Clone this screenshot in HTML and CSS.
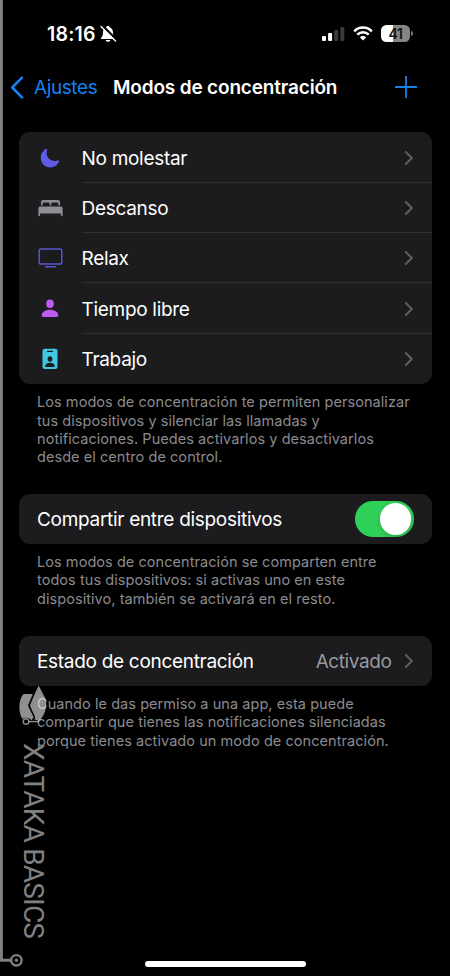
FILE: index.html
```html
<!DOCTYPE html>
<html lang="es">
<head>
<meta charset="utf-8">
<title>Modos de concentración</title>
<link rel="stylesheet" href="styles.css">
</head>
<body>
<svg class="defs" width="0" height="0" aria-hidden="true"><symbol id="chevron" viewBox="0 0 10 16"><path d="M1.8 2 L7.8 8 L1.8 14" fill="none" stroke="currentColor" stroke-width="2" stroke-linecap="round" stroke-linejoin="round"/></symbol></svg>
<div class="screen">
  <header class="status">
    <div class="clock"><span class="time">18:16</span>
      <svg class="bell" width="17" height="18" viewBox="0 0 17 18"><path fill="#fff" d="M8 1C9 1 9.7 1.6 9.9 2.4C12 3.2 13 5 13 7.5C13 10.8 14 11.5 14.8 12.7C15.2 13.5 14.8 14 14 14H2C1.2 14 .8 13.5 1.2 12.7C2 11.5 3 10.8 3 7.5C3 5 4 3.2 6.1 2.4C6.3 1.6 7 1 8 1ZM5.6 15H10.4C10 16.2 9.2 16.8 8 16.8S6 16.2 5.6 15Z"/><path d="M2.3 .6L16.8 14.9" stroke="#000" stroke-width="2.4"/><path d="M1 1.6L15.5 16.1" stroke="#fff" stroke-width="1.4" stroke-linecap="round"/></svg>
    </div>
    <div class="signals">
      <svg width="23" height="16" viewBox="0 0 23 16"><rect x="0" y="10" width="4" height="5" rx="1" fill="#fff"/><rect x="6.1" y="7" width="4" height="8" rx="1" fill="#fff"/><rect x="12.2" y="4" width="4" height="11" rx="1" fill="#3a3a3a"/><rect x="18.3" y="1" width="4" height="14" rx="1" fill="#3a3a3a"/></svg>
      <svg width="20" height="15" viewBox="0 0 20 15"><g fill="none" stroke="#fff" stroke-width="2.5"><path d="M1.2 5.3C6 .3 14 .3 18.8 5.3"/><path d="M4.3 8.7C7.5 5.5 12.5 5.5 15.7 8.7"/></g><path fill="#fff" d="M10 14.5L6.8 11.3C8.6 9.7 11.4 9.7 13.2 11.3Z"/></svg>
      <div class="battery"><span class="cell">41</span><i class="tip"></i></div>
    </div>
  </header>
  <nav class="nav">
    <svg class="back" width="14" height="23" viewBox="0 0 14 23"><path d="M12 1.7L2.2 11.5L12 21.3" fill="none" stroke="#1481ee" stroke-width="2.6" stroke-linecap="round" stroke-linejoin="round"/></svg>
    <span class="parent">Ajustes</span>
    <h1 class="title">Modos de concentración</h1>
    <svg class="add" width="22" height="22" viewBox="0 0 22 22"><path d="M11 .5V21.5M.5 11H21.5" stroke="#1481ee" stroke-width="1.8" stroke-linecap="round"/></svg>
  </nav>
  <main>
    <ul class="card modes">
      <li class="row"><span class="icon"><svg width="20" height="20" viewBox="0 0 20 20"><path fill="#5e5ce6" d="M6.1 1C6.8.7 7.4 1.2 7.1 1.9C4.7 8.4 10.8 14.6 18 12.6C18.9 12.3 19.4 12.9 19 13.7C17.3 17.4 14 19.4 10.4 19.4C5 19.4 .8 15.3.8 10C.8 6 2.9 2.4 6.1 1Z"/></svg></span><div class="line"><span class="label">No molestar</span><svg class="chev"><use href="#chevron"/></svg></div></li>
      <li class="row"><span class="icon"><svg width="25" height="18" viewBox="0 0 25 18"><g fill="#8e8e93"><path d="M3 6.5V3.2C3 1.7 3.8 1 5.2 1H19.8C21.2 1 22 1.7 22 3.2V6.5H20.4V5C20.4 3.9 19.9 3.4 18.9 3.4H14.8C13.8 3.4 13.3 3.9 13.3 5V6.5H11.7V5C11.7 3.9 11.2 3.4 10.2 3.4H6.1C5.1 3.4 4.6 3.9 4.6 5V6.5Z"/><path d="M.4 9.5C.4 8 1.2 7.4 2.6 7.4H22.4C23.8 7.4 24.6 8 24.6 9.5V16.5Q24.6 17.2 23.8 17.2Q23 17.2 23 16.5V14.4H2V16.5Q2 17.2 1.2 17.2Q.4 17.2 .4 16.5Z"/></g></svg></span><div class="line"><span class="label">Descanso</span><svg class="chev"><use href="#chevron"/></svg></div></li>
      <li class="row"><span class="icon"><svg width="25" height="20" viewBox="0 0 25 20"><rect x="1.2" y="1" width="22.6" height="15" rx="1.8" fill="none" stroke="#5856d0" stroke-width="1.5"/><path d="M7.5 18.7H17.5" stroke="#5856d0" stroke-width="1.5" stroke-linecap="round"/></svg></span><div class="line"><span class="label">Relax</span><svg class="chev"><use href="#chevron"/></svg></div></li>
      <li class="row"><span class="icon"><svg width="18" height="19" viewBox="0 0 18 19"><g fill="#bf5af2"><ellipse cx="9" cy="4.8" rx="3.8" ry="4.3"/><path d="M2.6 18C1.3 18 .7 17.4.7 16.3C.7 13.4 4 10.7 9 10.7S17.3 13.4 17.3 16.3C17.3 17.4 16.7 18 15.4 18Z"/></g></svg></span><div class="line"><span class="label">Tiempo libre</span><svg class="chev"><use href="#chevron"/></svg></div></li>
      <li class="row"><span class="icon"><svg width="16" height="22" viewBox="0 0 16 22"><rect x=".5" y=".7" width="15" height="20.4" rx="2.3" fill="#40c8e0"/><g fill="#1c1c1e"><rect x="4.8" y="2.7" width="6.4" height="1.2" rx=".6"/><ellipse cx="8" cy="11" rx="2.4" ry="2.7"/><path d="M3.2 18.3C3.2 16.4 5 14.8 8 14.8S12.8 16.4 12.8 18.3Q12.8 19 12 19H4Q3.2 19 3.2 18.3Z"/></g></svg></span><div class="line"><span class="label">Trabajo</span><svg class="chev"><use href="#chevron"/></svg></div></li>
    </ul>
    <p class="note first">Los modos de concentración te permiten personalizar<br>tus dispositivos y silenciar las llamadas y<br>notificaciones. Puedes activarlos y desactivarlos<br>desde el centro de control.</p>
    <section class="card single"><span class="label">Compartir entre dispositivos</span><span class="toggle"><i class="knob"></i></span></section>
    <p class="note second">Los modos de concentración se comparten entre<br>todos tus dispositivos: si activas uno en este<br>dispositivo, también se activará en el resto.</p>
    <section class="card single"><span class="label">Estado de concentración</span><span class="value">Activado</span><svg class="chev"><use href="#chevron"/></svg></section>
    <p class="note third">Cuando le das permiso a una app, esta puede<br>compartir que tienes las notificaciones silenciadas<br>porque tienes activado un modo de concentración.</p>
  </main>
  <div class="home"></div>
  <aside class="watermark">
    <svg class="frame" width="60" height="976" viewBox="0 0 60 976"><g fill="none" stroke="#808080"><path d="M1.4 0V960.3H11" stroke-width="3"/><circle cx="16.4" cy="960.3" r="5.2" stroke-width="2.4"/></g><circle cx="16.4" cy="960.3" r="1.7" fill="#808080"/>
    <g fill="#fff" fill-opacity=".56"><path d="M23.5 694H32.8L28 705.5L33.6 717.3L31.5 720.2Q29.5 717.8 26 717.8Q23.5 717.8 22.5 719C18.4 713 18 700 23.5 694Z"/><path d="M38.6 685.5L45.4 698.5C48 706 44.5 717 38.7 721L34.5 719.3L35.2 717.3L29.9 705.5L35 693.5Z"/></g><g fill="none" stroke="#fff" stroke-opacity=".54" stroke-width="1.4"><circle cx="26" cy="721.6" r="2.8"/><path d="M28.8 721.6H39"/></g></svg>
    <span class="brand">XATAKA BASICS</span>
  </aside>
</div>
</body>
</html>
```
FILE: styles.css
```css
* { box-sizing: border-box; }
body { margin: 0; background: #000; color: #fff; font-family: Inter, "Liberation Sans", sans-serif; }
.defs { position: absolute; }
.screen { position: relative; width: 450px; height: 976px; overflow: hidden; background: #000; display: flex; flex-direction: column; }
.status { height: 67px; padding: 0 37px 0 47px; display: flex; justify-content: space-between; align-items: center; }
.clock { display: flex; align-items: center; gap: 4px; }
.time { font-size: 19.5px; font-weight: 600; letter-spacing: 0.2px; line-height: 24px; }
.signals { display: flex; align-items: center; gap: 8px; }
.battery { display: flex; align-items: center; gap: 1px; }
.cell { width: 29px; height: 17px; border-radius: 5.5px; background: linear-gradient(90deg, #fff 12px, #858585 12px); color: #111; font-size: 14px; line-height: 17px; font-weight: 600; text-align: center; letter-spacing: -0.3px; }
.tip { width: 2px; height: 5px; border-radius: 0 2px 2px 0; background: #777; }
.nav { height: 40px; padding: 0 33px 0 10px; display: flex; align-items: center; }
.parent { margin-left: 10px; width: 79px; padding-top: 1px; font-size: 19px; line-height: 24px; color: #1481ee; letter-spacing: -0.4px; white-space: nowrap; }
.title { margin: 0; padding-top: 1px; font-size: 19px; line-height: 24px; font-weight: 600; letter-spacing: -0.17px; white-space: nowrap; }
.add { margin-left: auto; }
main { padding: 25.4px 18.5px 0; }
.card { margin: 0; padding: 0; list-style: none; background: #1c1c1e; border-radius: 11px; }
.row { height: 50.35px; display: flex; }
.icon { width: 63px; display: flex; align-items: center; justify-content: center; }
.line { flex: 1; display: flex; align-items: center; justify-content: space-between; padding: 1px 18px 0 0; border-bottom: 1px solid #303032; }
.row:last-child .line { border-bottom-color: transparent; }
.label { padding-top: 2px; font-size: 19px; line-height: 24px; letter-spacing: -0.3px; white-space: nowrap; }
.chev { width: 10px; height: 16px; color: #5f5f63; flex: none; }
.note { margin: 0; padding-left: 18.5px; font-size: 14.5px; line-height: 18.4px; letter-spacing: 0.06px; color: #8b8b90; white-space: nowrap; }
.first { padding-top: 9px; height: 109.6px; }
.second { padding-top: 9px; height: 91.7px; }
.third { padding-top: 9px; }
.single { height: 50.3px; padding: 0 18px 0 18.5px; display: flex; align-items: center; }
.toggle { margin-left: auto; width: 58.5px; height: 36px; border-radius: 18px; background: #30d158; padding: 2.3px; display: flex; justify-content: flex-end; }
.knob { width: 31.4px; height: 31.4px; border-radius: 50%; background: #fff; box-shadow: 0 2px 5px rgba(0,0,0,.18); }
.value { margin-left: auto; margin-right: 12px; padding-top: 2px; color: #98989e; font-size: 19px; line-height: 24px; letter-spacing: -0.4px; }
.home { position: absolute; left: 145px; top: 961px; width: 160.5px; height: 6px; border-radius: 3px; background: #fff; }
.watermark { position: absolute; left: 0; top: 0; width: 60px; height: 976px; }
.frame { display: block; }
.brand { position: absolute; left: 19px; top: 743px; writing-mode: vertical-rl; font-family: Roboto, "Liberation Sans", sans-serif; font-size: 28px; line-height: 28px; letter-spacing: -0.8px; color: #808080; white-space: nowrap; }
```
